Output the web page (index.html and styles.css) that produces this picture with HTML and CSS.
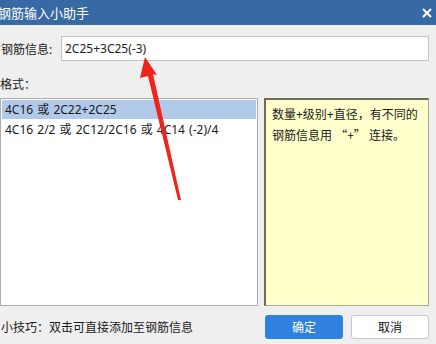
FILE: index.html
```html
<!DOCTYPE html>
<html lang="zh">
  <head>
    <meta charset="UTF-8" />
    <title>钢筋输入小助手</title>
    <link rel="stylesheet" href="styles.css">
  </head>
  <body>
    <div class="dialog">
      <div class="titlebar">
        <span class="title">钢筋输入小助手</span>
        <svg class="close" width="12" height="12" viewBox="0 0 12 12">
          <path d="M2 2 L10 10 M10 2 L2 10" stroke="#fff" stroke-width="2" />
        </svg>
      </div>

      <div class="content">
        <div class="field">
          <label for="rebar">钢筋信息:</label>
          <div class="input">2C25+3C25(-3)</div>
        </div>

        <div class="format-label">格式：</div>

        <div class="panes">
          <ul class="list">
            <li class="selected">4C16 或 2C22+2C25</li>
            <li>4C16 2/2 或 2C12/2C16 或 4C14 (-2)/4</li>
          </ul>
          <div class="hint">数量+级别+直径，有不同的钢筋信息用 <span class="cjk">“+”</span> 连接。</div>
        </div>

        <div class="footer">
          <span class="tip">小技巧：双击可直接添加至钢筋信息</span>
          <div class="buttons">
            <button type="button" class="btn primary">确定</button>
            <button type="button" class="btn">取消</button>
          </div>
        </div>
      </div>

      <!-- red annotation arrow drawn over the dialog -->
      <svg class="arrow" width="436" height="344" viewBox="0 0 436 344">
        <polygon points="145,57 157,75 153,74 181,200 178,200 148,76 140,78" fill="#f0231b" />
      </svg>
    </div>
  </body>
</html>
```

FILE: styles.css
```css
body {
  margin: 0;
  padding: 0;
  width: 436px;
  height: 344px;
  overflow: hidden;
  background-color: #efefef;
  font-family: "Noto Sans", "Noto Sans CJK SC", sans-serif;
  font-size: 12px;
  color: #1a1a1a;
}
.dialog {
  position: relative;
  height: 344px;
}
.titlebar {
  height: 25px;
  background-color: #3769a4;
  color: #fff;
  display: flex;
  align-items: center;
  justify-content: space-between;
  padding-right: 3px;
}
.title {
  font-size: 13px;
  margin-left: -2px;
}
.content {
  padding-right: 7px;
}
.field {
  display: flex;
  align-items: center;
  margin-top: 11px;
  height: 25px;
}
.field label {
  width: 60px;
  padding-left: 1px;
}
.input {
  flex: 1;
  height: 23px;
  line-height: 23px;
  padding-left: 3px;
  background-color: #fff;
  border: 1px solid #c3c3c3;
  color: #222;
}
.format-label {
  height: 37px;
  line-height: 20px;
  padding-top: 14px;
  box-sizing: border-box;
}
.panes {
  display: flex;
  gap: 6px;
  height: 208px;
}
.list {
  width: 258px;
  margin: 0;
  padding: 1px;
  list-style: none;
  background-color: #fff;
  border: 1px solid #adadad;
  box-sizing: border-box;
}
.list li {
  height: 19px;
  line-height: 19px;
  padding-left: 3px;
  margin-bottom: 1px;
  white-space: nowrap;
  word-spacing: 1px;
}
.list li.selected {
  background-color: #b1caea;
}
.hint {
  flex: 1;
  background-color: #ffffcc;
  border: 1px solid #a9a98f;
  border-left: 2px solid #6e6e55;
  border-top: 2px solid #6e6e55;
  padding: 5px 6px;
  line-height: 20px;
  box-sizing: border-box;
}
.cjk {
  font-family: "Noto Sans CJK SC", sans-serif;
}
.footer {
  display: flex;
  align-items: center;
  justify-content: space-between;
  height: 39px;
  padding-top: 1px;
}
.tip {
  padding-left: 1px;
}
.buttons {
  display: flex;
  gap: 8px;
}
.btn {
  width: 78px;
  height: 24px;
  font-family: inherit;
  font-size: 12px;
  border: 1px solid #c8c8c8;
  border-radius: 3px;
  background-color: #fff;
  color: #111;
}
.btn.primary {
  background-color: #2f80df;
  border-color: #2f80df;
  color: #fff;
}
.arrow {
  position: absolute;
  left: 0;
  top: 0;
  pointer-events: none;
}
```
